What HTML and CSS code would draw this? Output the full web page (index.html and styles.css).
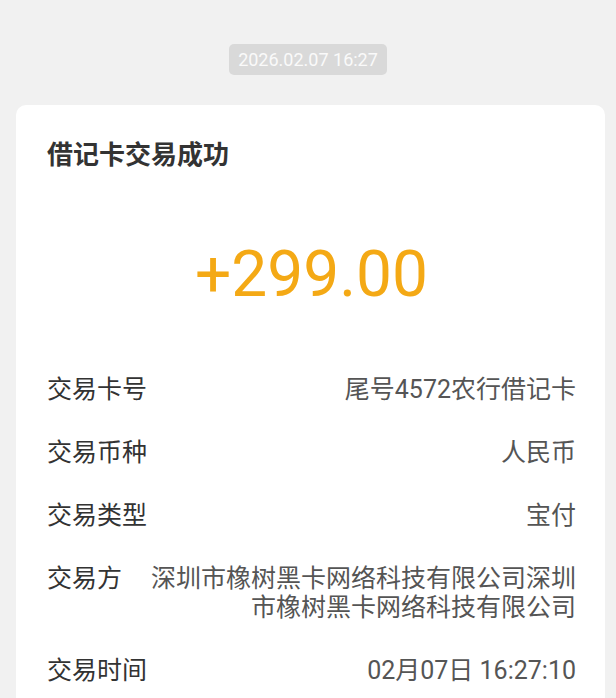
FILE: index.html
```html
<!DOCTYPE html>
<html>
<head>
    <meta charset="utf-8">
    <title>借记卡交易成功</title>
    <link rel="stylesheet" href="styles.css">
</head>
<body>
    <div class="time-row">
        <span class="time-pill">2026.02.07 16:27</span>
    </div>
    <div class="card">
        <h1 class="card-title">借记卡交易成功</h1>
        <div class="amount">+299.00</div>
        <div class="details">
            <div class="detail-row">
                <span class="label">交易卡号</span>
                <span class="value">尾号4572农行借记卡</span>
            </div>
            <div class="detail-row">
                <span class="label">交易币种</span>
                <span class="value">人民币</span>
            </div>
            <div class="detail-row">
                <span class="label">交易类型</span>
                <span class="value">宝付</span>
            </div>
            <div class="detail-row">
                <span class="label">交易方</span>
                <span class="value">深圳市橡树黑卡网络科技有限公司深圳市橡树黑卡网络科技有限公司</span>
            </div>
            <div class="detail-row">
                <span class="label">交易时间</span>
                <span class="value">02月07日 16:27:10</span>
            </div>
        </div>
    </div>
</body>
</html>
```

FILE: styles.css
```css
body {
    margin: 0;
    background-color: #f1f1f1;
    font-family: Roboto, "Noto Sans CJK SC", sans-serif;
}

.time-row {
    display: flex;
    justify-content: center;
    padding-top: 44px;
}

.time-pill {
    background-color: #d9d9d9;
    color: #fafafa;
    font-size: 18px;
    line-height: 31px;
    padding: 0 9px;
    border-radius: 5px;
}

.card {
    margin: 30px 11px 0 16px;
    padding: 32px 29px 0 31px;
    background-color: #fff;
    border-radius: 10px 10px 0 0;
}

.card-title {
    margin: 0;
    font-size: 26px;
    font-weight: bold;
    line-height: 36px;
    color: #333;
}

.amount {
    margin-top: 62px;
    text-align: center;
    font-size: 64px;
    line-height: 80px;
    color: #f4a915;
}

.details {
    margin-top: 43px;
}

.detail-row {
    display: flex;
    gap: 26px;
    padding: 17px 0;
    font-size: 25px;
    line-height: 29px;
}

.detail-row:last-child {
    padding-bottom: 13px;
}

.label {
    flex-shrink: 0;
    color: #333;
}

.value {
    flex: 1;
    text-align: right;
    color: #555;
}
```
